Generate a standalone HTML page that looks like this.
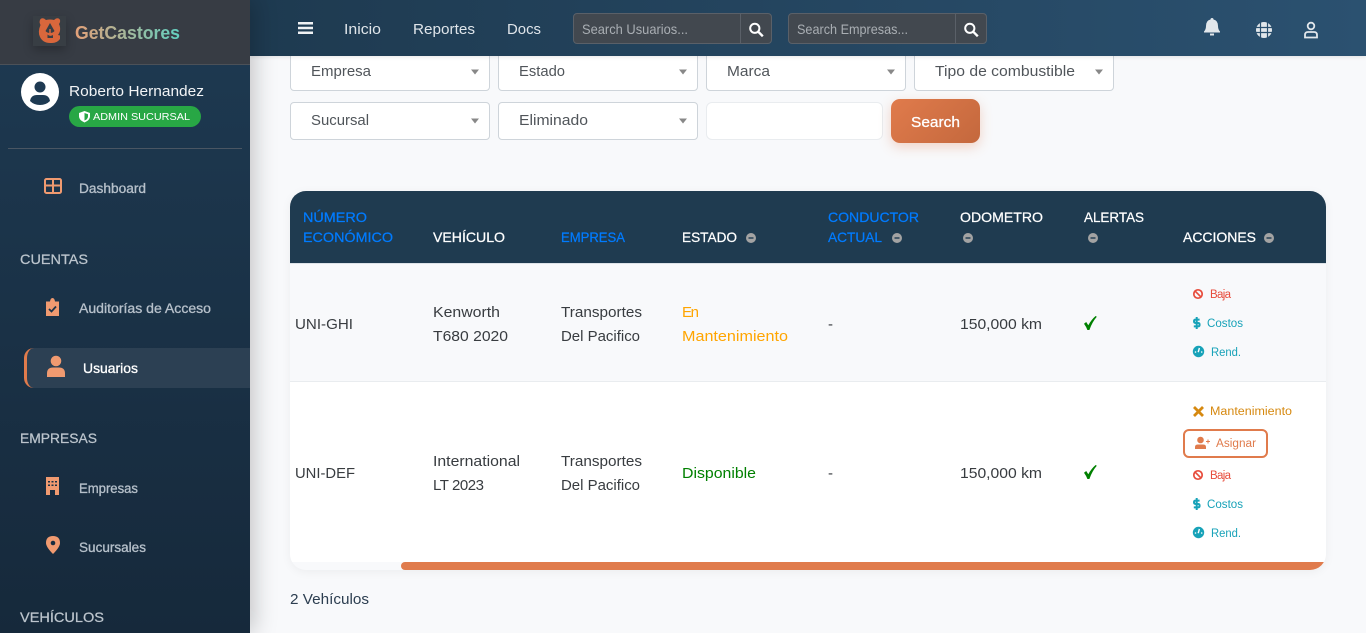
<!DOCTYPE html>
<html lang="es">
<head>
<meta charset="utf-8">
<title>GetCastores</title>
<style>
html,body{margin:0;padding:0;width:1366px;height:633px;overflow:hidden;background:#f8f9fb;font-family:"Liberation Sans",sans-serif}
div{position:absolute;box-sizing:border-box}
.sel{background:#fff;border:1px solid #ced4da;border-radius:4px;width:200px}
#ov{position:absolute;left:0;top:0;z-index:10}
#ov text{font-family:"Liberation Sans",sans-serif;white-space:pre}
.b{font-size:15px;fill:#383c40}
.nav{font-size:15px;fill:#dfe5ea}
.ph{font-size:14px;fill:#a9aeb3}
.sl{font-size:15px;fill:#50555a}
.side{font-size:13.5px;fill:#b6c0ca;stroke:#b6c0ca;stroke-width:.3px}
.sec{font-size:14px;fill:#bcc5cd;stroke:#bcc5cd;stroke-width:.25px}
.th{font-size:14px;fill:#fff;stroke:#fff;stroke-width:.25px}
.thb{font-size:14px;fill:#007bff;stroke:#007bff;stroke-width:.25px}
.a{font-size:11.5px}
</style>
</head>
<body>
<div class="sel" style="left:290px;top:50px;height:41px"></div>
<div class="sel" style="left:498px;top:50px;height:41px"></div>
<div class="sel" style="left:706px;top:50px;height:41px"></div>
<div class="sel" style="left:914px;top:50px;height:41px"></div>
<div class="sel" style="left:290px;top:102px;height:38px"></div>
<div class="sel" style="left:498px;top:102px;height:38px"></div>
<div style="left:706px;top:102px;width:177px;height:38px;background:#fff;border:1px solid #e9ecef;border-radius:6px"></div>
<div style="left:891px;top:99px;width:89px;height:44px;border-radius:9px;background:linear-gradient(135deg,#e07b4c,#c4683d);box-shadow:0 4px 12px rgba(224,123,76,.3)"></div>

<div style="left:290px;top:191px;width:1036px;height:379px;border-radius:16px;background:#f8f9fb;box-shadow:0 2px 10px rgba(0,0,0,.05);overflow:hidden">
  <div style="left:0;top:0;width:1036px;height:73px;background:#1f3b50;border-bottom:1px solid #dde3e8"></div>
  <div style="left:0;top:73px;width:1036px;height:118px;background:#f8f9fb;border-bottom:1px solid #e9ecef"></div>
  <div style="left:0;top:191px;width:1036px;height:180px;background:#fff"></div>
  <div style="left:111px;top:371px;width:925px;height:8px;background:#e07b4c;border-radius:4px 0 0 4px"></div>
</div>

<div style="left:250px;top:0;width:1116px;height:56px;background:linear-gradient(90deg,#1e3a50,#2b5170);box-shadow:0 1px 4px rgba(0,0,0,.1);z-index:3"></div>
<div style="left:573px;top:13px;width:199px;height:31px;background:#42484f;border:1px solid #5a6068;border-radius:4px;z-index:4"><div style="left:166px;top:0;width:1px;height:29px;background:#5a6068"></div></div>
<div style="left:788px;top:13px;width:199px;height:31px;background:#42484f;border:1px solid #5a6068;border-radius:4px;z-index:4"><div style="left:166px;top:0;width:1px;height:29px;background:#5a6068"></div></div>

<div style="left:0;top:0;width:250px;height:633px;background:linear-gradient(180deg,#1e3a52,#16293b);box-shadow:4px 0 22px rgba(0,0,0,.22);z-index:5">
  <div style="left:0;top:0;width:250px;height:65px;background:#373c44;border-bottom:1px solid #4c5158"></div>
  <div style="left:33px;top:16px;width:33px;height:30px;background:#383e44;box-shadow:0 4px 10px rgba(0,0,0,.25)"></div>
  <div style="left:69px;top:106px;width:132px;height:21px;background:#28a745;border-radius:11px"></div>
  <div style="left:8px;top:148px;width:234px;height:1px;background:#4a5663"></div>
  <div style="left:24px;top:348px;width:226px;height:40px;background:#2c4053;border-left:3px solid #e07b4c;border-radius:10px 0 0 10px"></div>
</div>

<svg id="ov" width="1366" height="633" viewBox="0 0 1366 633" xmlns="http://www.w3.org/2000/svg">
<defs>
<linearGradient id="lg" gradientUnits="userSpaceOnUse" x1="75" y1="0" x2="180" y2="0"><stop offset="0" stop-color="#e3a078"/><stop offset="1" stop-color="#62d0c0"/></linearGradient>
<g id="q"><circle cx="0" cy="0" r="5" fill="#a3a3a3"/><rect x="-2.5" y="-.7" width="5" height="1.4" fill="#1f3b50"/></g>
<g id="ban" fill="none" stroke-width="1.7"><circle cx="5" cy="5" r="4.2"/><path d="M2.2 2.2L7.8 7.8"/></g>
<g id="dollar" fill="none" stroke-width="2"><path d="M6.6 3.6H2.6Q1 3.6 1 5.3T2.6 7H5Q6.6 7 6.6 8.7T5 10.4H.8M3.7 1V13"/></g>
<g id="gauge"><circle cx="5.5" cy="5.500" r="5.700"/><path d="M6.400 2L5.200 6.200" stroke="#fff" stroke-width="1.400"/><circle cx="2.500" cy="6" r=".8" fill="#fff"/><circle cx="8.700" cy="6" r=".8" fill="#fff"/></g>
<g id="srch" fill="none" stroke="#fff" stroke-width="2"><circle cx="5.800" cy="5.800" r="4.600"/><path d="M9.200 9.200L13.800 13.800" stroke-width="2.400"/></g>
<path id="chk" d="M0 7.800L2.200 6L4.300 9.200Q7.400 3.600 11.600 0L12.800 .8Q8.200 6 5.400 14H3.400Q2.200 10.800 0 7.800Z" fill="#008000"/>
<path id="arr" d="M1 .5H9L5 5.500Z" fill="#888"/>
</defs>

<!-- brand -->
<path d="M40 20Q41 17.500 44 18.500L46 20Q50 19 54 20L56 18.500Q59 17.500 60 20Q60.500 22 59 24Q60.500 27 60 31Q59.500 33 58 35L60 35.500V39Q57 43 52 43H50Q43 43 40 37Q37.500 32 40.500 25Q39 22 40 20Z" fill="#d9673c"/>
<path d="M50 23L54.500 31Q53 33 50 33Q47 33 45.500 31Z" fill="#383e44"/>
<path d="M47.500 34.500Q50 37 53 35V38H47.500Z" fill="#383e44"/>
<path d="M50 29V33" stroke="#d9673c" stroke-width="1.500"/>
<text x="75" y="39" font-size="18" font-weight="bold" fill="url(#lg)" textLength="105" lengthAdjust="spacingAndGlyphs">GetCastores</text>

<!-- user -->
<circle cx="40" cy="92" r="19" fill="#fff"/>
<circle cx="40" cy="87" r="5.500" fill="#1e3a52"/>
<path d="M30 101Q31 95 37 95H43Q49 95 50 101Q46 105 40 105Q34 105 30 101Z" fill="#1e3a52"/>
<text x="69" y="96" font-size="15" fill="#f2f4f6" textLength="135" lengthAdjust="spacingAndGlyphs">Roberto Hernandez</text>
<path d="M84.500 111L90 113V116.500Q90 120 84.500 122.500Q79 120 79 116.500V113Z" fill="#fff"/>
<path d="M84.500 113V120.500Q88 119 88 116.500V114.300Z" fill="#28a745"/>
<text x="93" y="120" font-size="10.500" fill="#fff" textLength="97" lengthAdjust="spacingAndGlyphs">ADMIN SUCURSAL</text>

<!-- sidebar -->
<g fill="none" stroke="#f09a70" stroke-width="2"><rect x="45" y="179" width="16" height="14" rx="1.500"/><path d="M45 185.500H61M53 179V193"/></g>
<text class="side" x="79" y="193" textLength="67" lengthAdjust="spacingAndGlyphs">Dashboard</text>
<text class="sec" x="20" y="264" textLength="68" lengthAdjust="spacingAndGlyphs">CUENTAS</text>
<path d="M46 301.500H50Q50.500 298 52.500 298Q54.500 298 55 301.500H59V316H46Z" fill="#f09a70"/>
<path d="M49 309L51.500 311.500L56 306.500" fill="none" stroke="#1c3449" stroke-width="1.800"/>
<text class="side" x="79" y="313" textLength="132" lengthAdjust="spacingAndGlyphs">Auditorías de Acceso</text>
<circle cx="56" cy="361" r="5.300" fill="#f09a70"/>
<path d="M47 377V373.500Q47 367.500 53 367.500H59Q65 367.500 65 373.500V377Z" fill="#f09a70"/>
<text class="side" style="fill:#fff;stroke:#fff" x="83" y="373" textLength="55" lengthAdjust="spacingAndGlyphs">Usuarios</text>
<text class="sec" x="20" y="443" textLength="77" lengthAdjust="spacingAndGlyphs">EMPRESAS</text>
<path d="M46 477H59V495H55V490H50V495H46Z" fill="#f09a70"/>
<path d="M48 481h2v1.500h-2zM51.500 481h2v1.500h-2zM55 481h2v1.500h-2zM48 484.500h2v1.500h-2zM51.500 484.500h2v1.500h-2zM55 484.500h2v1.500h-2z" fill="#1a3044"/>
<text class="side" x="79" y="493" textLength="59" lengthAdjust="spacingAndGlyphs">Empresas</text>
<path d="M53 536Q60 536 60 543Q60 547 53 554Q46 547 46 543Q46 536 53 536Z" fill="#f09a70"/>
<circle cx="53" cy="543" r="2.300" fill="#182d40"/>
<text class="side" x="79" y="552" textLength="67" lengthAdjust="spacingAndGlyphs">Sucursales</text>
<text class="sec" x="20" y="622" textLength="84" lengthAdjust="spacingAndGlyphs">VEHÍCULOS</text>

<!-- nav -->
<path d="M298 22H313V24.500H298ZM298 26.800H313V29.300H298ZM298 31.500H313V34H298Z" fill="#f0f2f4"/>
<text class="nav" x="344" y="34" textLength="37" lengthAdjust="spacingAndGlyphs">Inicio</text>
<text class="nav" x="413" y="34" textLength="62" lengthAdjust="spacingAndGlyphs">Reportes</text>
<text class="nav" x="507" y="34" textLength="34" lengthAdjust="spacingAndGlyphs">Docs</text>
<text class="ph" x="582" y="34" textLength="106" lengthAdjust="spacingAndGlyphs">Search Usuarios...</text>
<use href="#srch" x="749" y="22.500"/>
<text class="ph" x="797" y="34" textLength="111" lengthAdjust="spacingAndGlyphs">Search Empresas...</text>
<use href="#srch" x="964" y="22.500"/>
<path d="M1212 18Q1213.500 18 1213.500 19.500Q1218 20.500 1218 26Q1218 29.500 1220 31.500V32.500H1204V31.500Q1206 29.500 1206 26Q1206 20.500 1210.500 19.500Q1210.500 18 1212 18ZM1210 33.500H1214V35.500H1210Z" fill="#e2e7eb"/>
<circle cx="1264" cy="30" r="8" fill="#e2e7eb"/>
<path d="M1256 27.500H1272M1256 32.500H1272M1260.500 22V38M1267.500 22V38" stroke="#2a4f6e" stroke-width="1.200" fill="none"/>
<circle cx="1311" cy="26" r="3.300" fill="none" stroke="#e2e7eb" stroke-width="1.800"/>
<path d="M1305 37.500V35Q1305 32 1308 32H1314Q1317 32 1317 35V37.500Z" fill="none" stroke="#e2e7eb" stroke-width="1.800"/>

<!-- filters -->
<text class="sl" x="311" y="76" textLength="60" lengthAdjust="spacingAndGlyphs">Empresa</text><use href="#arr" x="470" y="69"/>
<text class="sl" x="519" y="76" textLength="46" lengthAdjust="spacingAndGlyphs">Estado</text><use href="#arr" x="678" y="69"/>
<text class="sl" x="727" y="76" textLength="43" lengthAdjust="spacingAndGlyphs">Marca</text><use href="#arr" x="886" y="69"/>
<text class="sl" x="935" y="76" textLength="140" lengthAdjust="spacingAndGlyphs">Tipo de combustible</text><use href="#arr" x="1094" y="69"/>
<text class="sl" x="311" y="125" textLength="58" lengthAdjust="spacingAndGlyphs">Sucursal</text><use href="#arr" x="470" y="118"/>
<text class="sl" x="519" y="125" textLength="69" lengthAdjust="spacingAndGlyphs">Eliminado</text><use href="#arr" x="678" y="118"/>
<text x="911" y="127" font-size="15" fill="#fff" stroke="#fff" stroke-width=".3" textLength="49" lengthAdjust="spacingAndGlyphs">Search</text>

<!-- table head -->
<text class="thb" x="303" y="222" textLength="64" lengthAdjust="spacingAndGlyphs">NÚMERO</text>
<text class="thb" x="303" y="242" textLength="90" lengthAdjust="spacingAndGlyphs">ECONÓMICO</text>
<text class="th" x="433" y="242" textLength="72" lengthAdjust="spacingAndGlyphs">VEHÍCULO</text>
<text class="thb" x="561" y="242" textLength="64" lengthAdjust="spacingAndGlyphs">EMPRESA</text>
<text class="th" x="682" y="242" textLength="55" lengthAdjust="spacingAndGlyphs">ESTADO</text><use href="#q" x="751" y="238"/>
<text class="thb" x="828" y="222" textLength="91" lengthAdjust="spacingAndGlyphs">CONDUCTOR</text>
<text class="thb" x="828" y="242" textLength="54" lengthAdjust="spacingAndGlyphs">ACTUAL</text><use href="#q" x="897" y="238"/>
<text class="th" x="960" y="222" textLength="83" lengthAdjust="spacingAndGlyphs">ODOMETRO</text><use href="#q" x="968" y="238"/>
<text class="th" x="1084" y="222" textLength="60" lengthAdjust="spacingAndGlyphs">ALERTAS</text><use href="#q" x="1093" y="238"/>
<text class="th" x="1183" y="242" textLength="73" lengthAdjust="spacingAndGlyphs">ACCIONES</text><use href="#q" x="1269" y="238"/>

<!-- row 1 -->
<text class="b" x="295" y="329" textLength="58" lengthAdjust="spacingAndGlyphs">UNI-GHI</text>
<text class="b" x="433" y="317" textLength="67" lengthAdjust="spacingAndGlyphs">Kenworth</text>
<text class="b" x="433" y="341" textLength="75" lengthAdjust="spacingAndGlyphs">T680 2020</text>
<text class="b" x="561" y="317" textLength="81" lengthAdjust="spacingAndGlyphs">Transportes</text>
<text class="b" x="561" y="341" textLength="79" lengthAdjust="spacingAndGlyphs">Del Pacifico</text>
<text class="b" style="fill:#ffa500" x="682" y="317" textLength="17" lengthAdjust="spacing">En</text>
<text class="b" style="fill:#ffa500" x="682" y="341" textLength="106" lengthAdjust="spacingAndGlyphs">Mantenimiento</text>
<text class="b" x="828" y="329">-</text>
<text class="b" x="960" y="329" textLength="82" lengthAdjust="spacingAndGlyphs">150,000 km</text>
<use href="#chk" x="1084" y="316"/>
<use href="#ban" x="1193" y="289" stroke="#e74c3c"/><text class="a" fill="#e74c3c" x="1210" y="298" textLength="21" lengthAdjust="spacing">Baja</text>
<use href="#dollar" x="1193" y="316" stroke="#17a2b8"/><text class="a" fill="#17a2b8" x="1207" y="327" textLength="36" lengthAdjust="spacingAndGlyphs">Costos</text>
<use href="#gauge" x="1193" y="346" fill="#17a2b8"/><text class="a" fill="#17a2b8" x="1211" y="356" textLength="30" lengthAdjust="spacingAndGlyphs">Rend.</text>

<!-- row 2 -->
<text class="b" x="295" y="478" textLength="60" lengthAdjust="spacingAndGlyphs">UNI-DEF</text>
<text class="b" x="433" y="466" textLength="87" lengthAdjust="spacingAndGlyphs">International</text>
<text class="b" x="433" y="490" textLength="51" lengthAdjust="spacing">LT 2023</text>
<text class="b" x="561" y="466" textLength="81" lengthAdjust="spacingAndGlyphs">Transportes</text>
<text class="b" x="561" y="490" textLength="79" lengthAdjust="spacingAndGlyphs">Del Pacifico</text>
<text class="b" style="fill:#008000" x="682" y="478" textLength="74" lengthAdjust="spacingAndGlyphs">Disponible</text>
<text class="b" x="828" y="478">-</text>
<text class="b" x="960" y="478" textLength="82" lengthAdjust="spacingAndGlyphs">150,000 km</text>
<use href="#chk" x="1084" y="465"/>
<path d="M1194 407L1203 416M1203 407L1194 416" stroke="#d68910" stroke-width="2.800" fill="none"/>
<text class="a" fill="#d68910" x="1210" y="415" textLength="82" lengthAdjust="spacingAndGlyphs">Mantenimiento</text>
<rect x="1184" y="430" width="83" height="27" rx="5" fill="#fff" stroke="#e07b4c" stroke-width="2"/>
<circle cx="1200.500" cy="440" r="3.300" fill="#e07b4c"/>
<path d="M1195 449V447Q1195 444.500 1198 444.500H1203Q1206 444.500 1206 447V449Z" fill="#e07b4c"/>
<path d="M1206 441.500H1210M1208 439.500V443.500" stroke="#e07b4c" stroke-width="1"/>
<text class="a" fill="#e07b4c" x="1216" y="447" textLength="40" lengthAdjust="spacingAndGlyphs">Asignar</text>
<use href="#ban" x="1193" y="470" stroke="#e74c3c"/><text class="a" fill="#e74c3c" x="1210" y="479" textLength="21" lengthAdjust="spacing">Baja</text>
<use href="#dollar" x="1193" y="497" stroke="#17a2b8"/><text class="a" fill="#17a2b8" x="1207" y="508" textLength="36" lengthAdjust="spacingAndGlyphs">Costos</text>
<use href="#gauge" x="1193" y="527" fill="#17a2b8"/><text class="a" fill="#17a2b8" x="1211" y="537" textLength="30" lengthAdjust="spacingAndGlyphs">Rend.</text>

<text x="290" y="604" font-size="15" fill="#2c3e50" textLength="79" lengthAdjust="spacingAndGlyphs">2 Vehículos</text>
</svg>
</body>
</html>
